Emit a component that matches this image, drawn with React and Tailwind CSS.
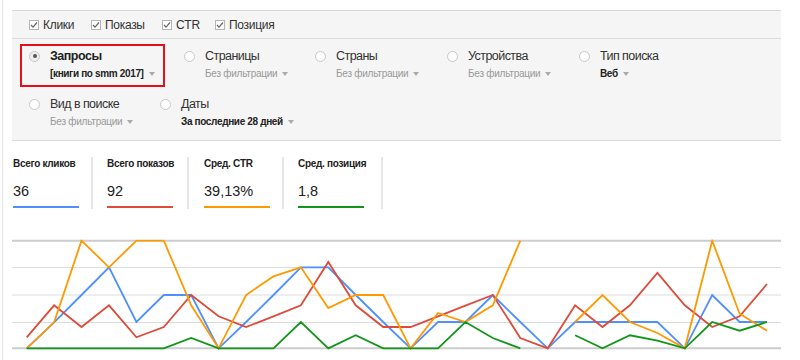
import React from "react";

const X0 = 14.7;
const DX = 27.42;

const series = [
  {
    color: "#4d90fe",
    d: [391,313,231,148,312,231,231,391,312,231,148,148,231,312,391,312,312,231,312,391,312,312,312,312,391,231,312,312],
  },
  {
    color: "#dd4b39",
    d: [358,262,327,262,358,327,231,295,327,295,262,132,262,327,327,295,263,231,360,391,262,327,262,165,262,327,295,198],
  },
  {
    color: "#ff9900",
    d: [391,313,68,148,68,68,262,391,231,175,148,270,231,231,391,285,312,262,68,null,312,231,312,345,391,68,287,338],
  },
  {
    color: "#109618",
    d: [391,391,391,391,391,391,360,391,391,391,312,391,352,391,391,391,312,360,391,null,352,391,352,368,391,312,338,312],
  },
];

function pathFor(arr) {
  let p = "";
  let pen = false;
  arr.forEach((v, i) => {
    if (v === null) {
      pen = false;
      return;
    }
    const x = (X0 + DX * i).toFixed(1);
    const y = (v / 3).toFixed(1);
    p += (pen ? " L" : " M") + x + " " + y;
    pen = true;
  });
  return p.trim();
}

function Check({ label, width }) {
  return (
    <div className={"flex items-center gap-[4px] " + width}>
      <svg width="10" height="10" viewBox="0 0 10 10" className="shrink-0">
        <rect x="0.5" y="0.5" width="9" height="9" fill="#fff" stroke="#b5b5b5" />
        <path d="M2 5 L4 7.2 L8 2.5" fill="none" stroke="#666" strokeWidth="1.2" />
      </svg>
      <span className="text-[12px] tracking-[-0.3px] text-[#333] leading-[16px]">{label}</span>
    </div>
  );
}

function Arrow() {
  return (
    <span className="inline-block w-0 h-0 ml-[5px] align-middle border-x-[3px] border-t-[4px] border-x-transparent border-t-[#aaa]" />
  );
}

function Radio({ title, sub, checked, boldSub, red, width }) {
  return (
    <div className={width}>
      <div
        className={
          "inline-block border-2 pl-[7px] pr-[8px] pt-[2px] pb-[4px] " +
          (red ? "border-[#e3101c]" : "border-transparent")
        }
      >
        <div className="flex items-center gap-[10px]">
          {checked ? (
            <span className="w-[11px] h-[11px] rounded-full border border-[#c8c8c8] bg-[#eee] flex items-center justify-center shrink-0">
              <span className="w-[4px] h-[4px] rounded-full bg-[#555]" />
            </span>
          ) : (
            <span className="w-[11px] h-[11px] rounded-full border border-[#c8c8c8] bg-white shrink-0" />
          )}
          <span
            className={
              "text-[12.5px] leading-[16px] whitespace-nowrap " +
              (checked ? "font-bold text-[#222] tracking-[-0.5px]" : "text-[#333] tracking-[-0.55px]")
            }
          >
            {title}
          </span>
        </div>
        <div className="pl-[21px] mt-[3px] text-[10px] leading-[14px] whitespace-nowrap">
          <span
            className={
              boldSub ? "font-bold text-[#222] tracking-[-0.35px]" : "text-[#999] tracking-[-0.25px]"
            }
          >
            {sub}
          </span>
          <Arrow />
        </div>
      </div>
    </div>
  );
}

function Metric({ label, value, color, width, pl }) {
  return (
    <div className={width + " " + pl + " border-r-2 border-[#e6e6e6] pb-[1px]"}>
      <div className="text-[10px] tracking-[-0.3px] font-bold text-[#222] leading-[13px] whitespace-nowrap">
        {label}
      </div>
      <div className="mt-[12px] text-[14.5px] text-[#222] leading-[18px]">{value}</div>
      <div className={"mt-[6px] w-[66px] h-[2px] " + color} />
    </div>
  );
}

export default function App() {
  return (
    <div
      className="w-[800px] h-[360px] overflow-hidden bg-white"
      style={{ fontFamily: '"Liberation Sans", Arial, sans-serif' }}
    >
      <div className="ml-[2px] h-[360px] border-l border-[#e6e6e6] pt-[10px]">
        <div className="ml-[9px] w-[769px] bg-[#f5f5f5] border-t border-b border-[#d9d9d9]">
          <div className="h-[28px] flex items-center pl-[17px] border-b border-[#d9d9d9]">
            <Check width="w-[62px]" label="Клики" />
            <Check width="w-[71px]" label="Показы" />
            <Check width="w-[53px]" label="CTR" />
            <Check width="" label="Позиция" />
          </div>
          <div className="pl-[8px] pt-[5px] pb-[5px] flex flex-col gap-[5px]">
            <div className="flex">
              <Radio width="w-[155px]" title="Запросы" sub="[книги по smm 2017]" checked boldSub red />
              <Radio width="w-[131px]" title="Страницы" sub="Без фильтрации" />
              <Radio width="w-[132px]" title="Страны" sub="Без фильтрации" />
              <Radio width="w-[132px]" title="Устройства" sub="Без фильтрации" />
              <Radio width="w-[132px]" title="Тип поиска" sub="Веб" boldSub />
            </div>
            <div className="flex">
              <Radio width="w-[131px]" title="Вид в поиске" sub="Без фильтрации" />
              <Radio width="w-[200px]" title="Даты" sub="За последние 28 дней" boldSub />
            </div>
          </div>
        </div>
        <div className="ml-[9px] mt-[16px] flex">
          <Metric width="w-[81px]" pl="pl-[1px]" label="Всего кликов" value="36" color="bg-[#4d90fe]" />
          <Metric width="w-[96px]" pl="pl-[14px]" label="Всего показов" value="92" color="bg-[#dd4b39]" />
          <Metric width="w-[95px]" pl="pl-[15px]" label="Сред. CTR" value="39,13%" color="bg-[#ff9900]" />
          <Metric width="w-[99px]" pl="pl-[14px]" label="Сред. позиция" value="1,8" color="bg-[#109618]" />
        </div>
        <div className="ml-[9px] mt-[9px]">
          <svg width="769" height="140" viewBox="0 0 769 140" className="block">
            <defs>
              <clipPath id="plot">
                <rect x="0" y="21.5" width="769" height="112" />
              </clipPath>
            </defs>
            <line x1="0" x2="769" y1="49.5" y2="49.5" stroke="#dcdcdc" strokeWidth="1" />
            <line x1="0" x2="769" y1="77" y2="77" stroke="#dcdcdc" strokeWidth="1" />
            <line x1="0" x2="769" y1="104.5" y2="104.5" stroke="#dcdcdc" strokeWidth="1" />
            <line x1="0" x2="769" y1="22.7" y2="22.7" stroke="#cccccc" strokeWidth="2" />
            <line x1="0" x2="769" y1="130.3" y2="130.3" stroke="#cccccc" strokeWidth="2" />
            <g clipPath="url(#plot)">
              {series.map((s, i) => (
                <path
                  key={i}
                  d={pathFor(s.d)}
                  fill="none"
                  stroke={s.color}
                  strokeWidth="1.8"
                  strokeLinejoin="miter"
                />
              ))}
            </g>
          </svg>
        </div>
      </div>
    </div>
  );
}
